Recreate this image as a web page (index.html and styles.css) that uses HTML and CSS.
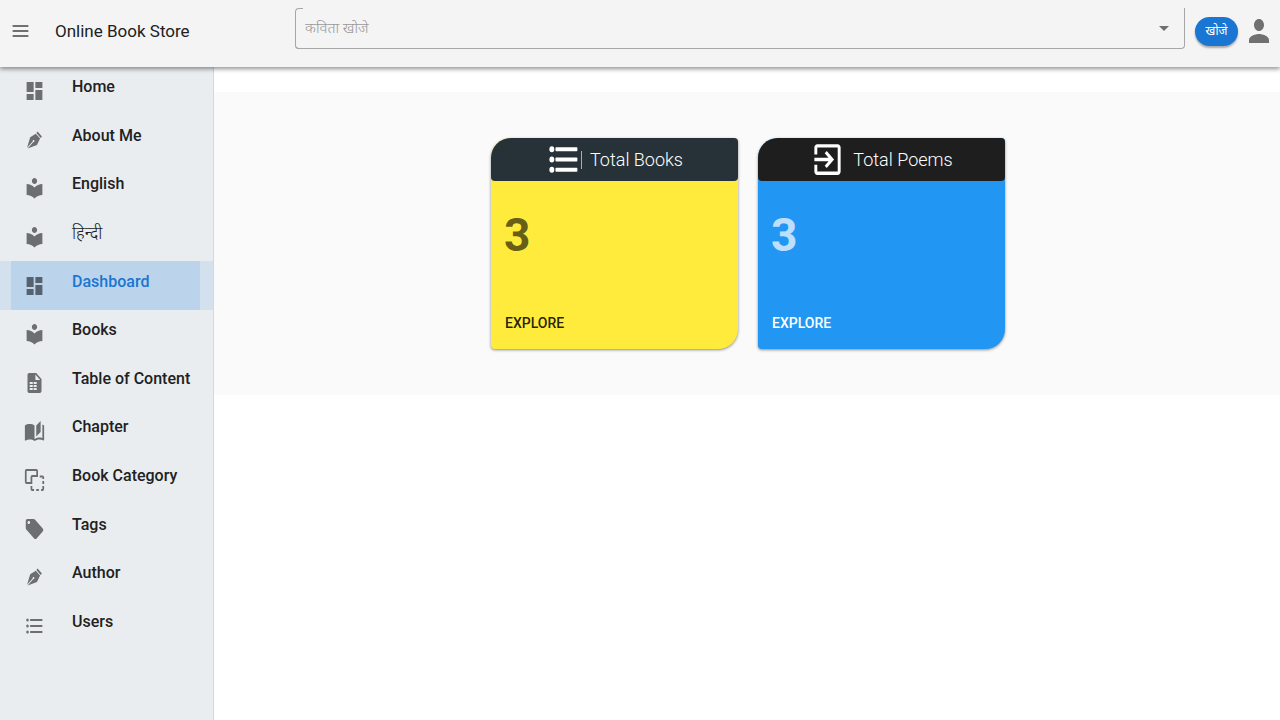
FILE: index.html
```
<!DOCTYPE html>
<html lang="en">
<head>
<meta charset="utf-8">
<meta name="viewport" content="width=device-width, initial-scale=1">
<title>Online Book Store</title>
<link rel="stylesheet" href="styles.css">
</head>
<body>
<svg class="sprite" aria-hidden="true">
  <symbol id="i-dash" viewBox="0 0 24 24" preserveAspectRatio="none"><path d="M3 13h8V3H3v10zm0 8h8v-6H3v6zm10 0h8V11h-8v10zm0-18v6h8V3h-8z"/></symbol>
  <symbol id="i-pen" viewBox="0 0 24 24" preserveAspectRatio="none"><path d="M15.54 3.5L20.5 8.47 19.07 9.88 14.12 4.93 15.54 3.5M3.5 19.78L10 13.31C9.9 13 9.97 12.61 10.23 12.35 10.62 11.96 11.26 11.96 11.65 12.35 12.04 12.75 12.04 13.38 11.65 13.77 11.39 14.03 11 14.1 10.69 14L4.22 20.5 14.83 16.95 18.36 10.59 13.42 5.64 7.05 9.17 3.5 19.78Z"/></symbol>
  <symbol id="i-reader" viewBox="0 0 24 24" preserveAspectRatio="none"><path d="M12 11.55C9.64 9.35 6.48 8 3 8v11c3.48 0 6.64 1.35 9 3.55 2.36-2.19 5.52-3.55 9-3.55V8c-3.48 0-6.64 1.35-9 3.55zM12 8c1.66 0 3-1.34 3-3s-1.34-3-3-3-3 1.34-3 3 1.34 3 3 3z"/></symbol>
  <symbol id="i-table" viewBox="0 0 24 24" preserveAspectRatio="none"><path fill-rule="evenodd" d="M14 2H6C4.900 2 4 2.900 4 4v16c0 1.100.9 2 2 2h12c1.100 0 2-.9 2-2V8l-6-6zM10 19H6.500v-2H10v2zm0-3H6.500v-2H10v2zm0-3H6.500v-2H10v2zm4.500 6H11v-2h3.500v2zm0-3H11v-2h3.500v2zm0-3H11v-2h3.500v2zM13 9V3.500L18.500 9H13z"/></symbol>
  <symbol id="i-book" viewBox="0 0 24 24" preserveAspectRatio="none"><path d="M19 2L14 6.5V17.5L19 13V2M6.5 5C4.55 5 2.45 5.4 1 6.5V21.16C1 21.41 1.25 21.66 1.5 21.66 1.6 21.66 1.65 21.59 1.75 21.59 3.1 20.94 5.05 20.5 6.5 20.5 8.45 20.5 10.55 20.9 12 22 13.35 21.15 15.8 20.5 17.5 20.5 19.15 20.5 20.85 20.81 22.25 21.56 22.35 21.61 22.4 21.59 22.5 21.59 22.75 21.59 23 21.34 23 21.09V6.5C22.4 6.05 21.75 5.75 21 5.5V19C19.9 18.65 18.7 18.5 17.5 18.5 15.8 18.5 13.35 19.15 12 20V6.5C10.55 5.4 8.45 5 6.5 5Z"/></symbol>
  <symbol id="i-group" viewBox="0 0 24 24" preserveAspectRatio="none"><g fill="none" stroke="currentColor" stroke-width="2"><path d="M3 2h11a1 1 0 0 1 1 1v5H9.500a1 1 0 0 0-1 1v6H3a1 1 0 0 1-1-1V3a1 1 0 0 1 1-1z"/><path d="M18 8.500h3a1 1 0 0 1 1 1V11M22 13v3M22 18v3a1 1 0 0 1-1 1h-1.500M17 22h-3M11.500 22h-2a1 1 0 0 1-1-1v-3"/></g></symbol>
  <symbol id="i-tag" viewBox="0 0 24 24" preserveAspectRatio="none"><path d="M21.410 11.580l-9-9C12.050 2.220 11.550 2 11 2H4c-1.100 0-2 .9-2 2v7c0 .55.22 1.050.590 1.420l9 9c.36.36.86.58 1.410.58.55 0 1.050-.22 1.410-.59l7-7c.37-.36.59-.86.59-1.410 0-.55-.23-1.060-.59-1.420zM5.500 7C4.670 7 4 6.330 4 5.500S4.670 4 5.500 4 7 4.670 7 5.500 6.330 7 5.500 7z"/></symbol>
  <symbol id="i-list" viewBox="0 0 24 24" preserveAspectRatio="none"><path d="M7 5h14v2H7zM7 11h14v2H7zM7 17h14v2H7z"/><circle cx="4" cy="6" r="1.500"/><circle cx="4" cy="12" r="1.500"/><circle cx="4" cy="18" r="1.500"/></symbol>
  <symbol id="i-list-bold" viewBox="0 0 24 24" preserveAspectRatio="none"><rect x="6.500" y="4.800" width="15" height="2.400" rx=".4"/><rect x="6.500" y="10.800" width="15" height="2.400" rx=".4"/><rect x="6.500" y="16.800" width="15" height="2.400" rx=".4"/><circle cx="4" cy="6" r="1.700"/><circle cx="4" cy="12" r="1.700"/><circle cx="4" cy="18" r="1.700"/></symbol>
  <symbol id="i-exit" viewBox="0 0 24 24" preserveAspectRatio="none"><path d="M10.090 15.590L11.500 17l5-5-5-5-1.410 1.410L12.670 11H3v2h9.670l-2.580 2.590zM19 3H5c-1.110 0-2 .9-2 2v4h2V5h14v14H5v-4H3v4c0 1.100.89 2 2 2h14c1.100 0 2-.9 2-2V5c0-1.100-.9-2-2-2z"/></symbol>
  <symbol id="i-menu" viewBox="0 0 24 24" preserveAspectRatio="none"><path d="M3 18h18v-2H3v2zm0-5h18v-2H3v2zm0-7v2h18V6H3z"/></symbol>
  <symbol id="i-user" viewBox="0 0 24 24" preserveAspectRatio="none"><path d="M12 12c2.210 0 4-1.790 4-4s-1.790-4-4-4-4 1.790-4 4 1.790 4 4 4zm0 2c-2.670 0-8 1.340-8 4v2h16v-2c0-2.660-5.330-4-8-4z"/></symbol>
</svg>

<header class="topbar">
  <button class="icon-button" type="button" aria-label="Toggle menu"><svg class="icon-menu"><use href="#i-menu"/></svg></button>
  <h1 class="brand">Online Book Store</h1>
  <form class="search">
    <div class="search-field">
      <span class="outline-start"></span>
      <input class="search-input" type="text" placeholder="कविता खोजे" aria-label="कविता खोजे">
      <span class="caret"></span>
    </div>
    <button class="search-button" type="button">खोजे</button>
  </form>
  <button class="icon-button" type="button" aria-label="Account"><svg class="icon-user"><use href="#i-user"/></svg></button>
</header>

<div class="layout">
  <nav class="sidebar" aria-label="Main">
    <ul class="menu">
      <li><a class="menu-link" href="#"><svg class="icon"><use href="#i-dash"/></svg><span>Home</span></a></li>
      <li><a class="menu-link" href="#"><svg class="icon"><use href="#i-pen"/></svg><span>About Me</span></a></li>
      <li><a class="menu-link" href="#"><svg class="icon"><use href="#i-reader"/></svg><span>English</span></a></li>
      <li><a class="menu-link" href="#"><svg class="icon"><use href="#i-reader"/></svg><span class="hindi">हिन्दी</span></a></li>
      <li class="active"><a class="menu-link" href="#" aria-current="page"><svg class="icon"><use href="#i-dash"/></svg><span>Dashboard</span></a></li>
      <li><a class="menu-link" href="#"><svg class="icon"><use href="#i-reader"/></svg><span>Books</span></a></li>
      <li><a class="menu-link" href="#"><svg class="icon"><use href="#i-table"/></svg><span>Table of Content</span></a></li>
      <li><a class="menu-link" href="#"><svg class="icon"><use href="#i-book"/></svg><span>Chapter</span></a></li>
      <li><a class="menu-link" href="#"><svg class="icon"><use href="#i-group"/></svg><span>Book Category</span></a></li>
      <li><a class="menu-link" href="#"><svg class="icon"><use href="#i-tag"/></svg><span>Tags</span></a></li>
      <li><a class="menu-link" href="#"><svg class="icon"><use href="#i-pen"/></svg><span>Author</span></a></li>
      <li><a class="menu-link" href="#"><svg class="icon"><use href="#i-list"/></svg><span>Users</span></a></li>
    </ul>
  </nav>
  <main class="content">
    <section class="band">
      <article class="card card-books">
        <h2 class="card-head"><svg class="icon-card"><use href="#i-list-bold"/></svg><span class="divider"></span><span>Total Books</span></h2>
        <p class="count">3</p>
        <button class="explore" type="button">EXPLORE</button>
      </article>
      <article class="card card-poems">
        <h2 class="card-head"><svg class="icon-card"><use href="#i-exit"/></svg><span class="card-title">Total Poems</span></h2>
        <p class="count">3</p>
        <button class="explore" type="button">EXPLORE</button>
      </article>
    </section>
  </main>
</div>
</body>
</html>
```
FILE: styles.css
```
* { box-sizing: border-box; }
body {
  margin: 0;
  min-height: 100vh;
  display: flex;
  flex-direction: column;
  background: #fff;
  color: #212121;
  font-family: Roboto, "Noto Sans", sans-serif;
}
svg { display: block; flex: none; fill: currentColor; }
.sprite { position: absolute; width: 0; height: 0; }
button { border: 0; padding: 0; background: none; font: inherit; color: inherit; cursor: pointer; }

.topbar {
  position: relative;
  z-index: 1;
  display: flex;
  align-items: flex-start;
  height: 67px;
  padding: 8px 6px 0 10px;
  background: #f4f4f4;
  box-shadow: 0 2px 4px rgba(0, 0, 0, .3), 0 1px 6px rgba(0, 0, 0, .2);
}
.icon-button { display: flex; align-items: center; height: 46px; color: #707070; }
.icon-menu { width: 21px; height: 24px; }
.icon-user { width: 30px; height: 36px; margin-left: 6px; }
.brand { width: 240px; margin: 0 0 0 24px; font-size: 17px; font-weight: 400; line-height: 46px; white-space: nowrap; }
.search { flex: 1; display: flex; gap: 10px; }
.search-field {
  position: relative;
  flex: 1;
  display: flex;
  align-items: center;
  height: 41px;
  padding: 0 15px 0 10px;
  border: solid #a6a6a6;
  border-width: 0 1px 1px 0;
  border-radius: 0 0 4px 4px;
}
.outline-start {
  position: absolute;
  left: 0;
  top: 0;
  bottom: -1px;
  width: 8px;
  border: solid #a6a6a6;
  border-width: 1px 0 1px 1px;
  border-radius: 4px 0 0 4px;
}
.search-input { flex: 1; min-width: 0; height: 40px; border: 0; padding: 0; background: none; outline: 0; font: 300 15px/40px Roboto, "Noto Sans", sans-serif; color: #212121; }
.search-input::placeholder { color: #999; opacity: 1; }
.caret { border: 5px solid transparent; border-top-color: #707070; border-bottom: 0; }
.search-button {
  width: 43px;
  height: 29px;
  margin-top: 9px;
  border-radius: 15px;
  background: #1976d2;
  color: #fff;
  font-size: 12px;
  line-height: 29px;
  box-shadow: 0 2px 2px rgba(0, 0, 0, .3);
}

.layout { flex: 1; display: flex; }
.sidebar { width: 214px; flex: none; background: #e9edf0; border-right: 1px solid #d6d9db; }
.menu { display: grid; grid-auto-rows: 1fr; height: 583px; margin: 0; padding: 0; list-style: none; }
.menu li { display: flex; padding: 0 13px 0 11px; }
.menu-link { flex: 1; display: flex; align-items: center; gap: 27px; padding-left: 13px; color: #212121; text-decoration: none; font-size: 16px; font-weight: 500; line-height: 24px; white-space: nowrap; }
.menu-link span { padding-bottom: 8px; }
.menu-link .hindi { font-size: 17px; font-weight: 300; }
.icon { width: 21px; height: 24px; color: #6c6e70; }
.menu .active { background: #d3e1ee; }
.active .menu-link { background: #bbd3eb; color: #1976d2; }
.active .icon { color: #56636f; }

.content { flex: 1; padding-top: 25px; }
.band { display: flex; justify-content: center; gap: 20px; padding: 46px 18px 46px 20px; background: #fafafa; }
.card { display: flex; flex-direction: column; align-items: flex-start; width: 247px; height: 211px; border-radius: 20px 4px 20px 4px; box-shadow: 0 1px 3px rgba(0, 0, 0, .45); }
.card-books { background: #ffeb3b; color: rgba(0, 0, 0, .87); }
.card-poems { background: #2196f3; color: #fff; }
.card-head { align-self: stretch; display: flex; align-items: center; justify-content: center; height: 43px; margin: 0; border-radius: 20px 4px 4px 4px; background: #263238; color: #fff; font-size: 18px; font-weight: 300; }
.card-poems .card-head { background: #1e1e1e; }
.icon-card { width: 35px; height: 41px; }
.divider { width: 1px; height: 18px; margin-right: 8px; background: #a8adaf; }
.card-title { margin-left: 8px; }
.count { margin: 24px 0 0 13px; font-size: 46px; font-weight: 700; line-height: 60px; opacity: .7; }
.explore { margin: auto 0 16px 14px; font-size: 14px; font-weight: 500; line-height: 20px; }
```
